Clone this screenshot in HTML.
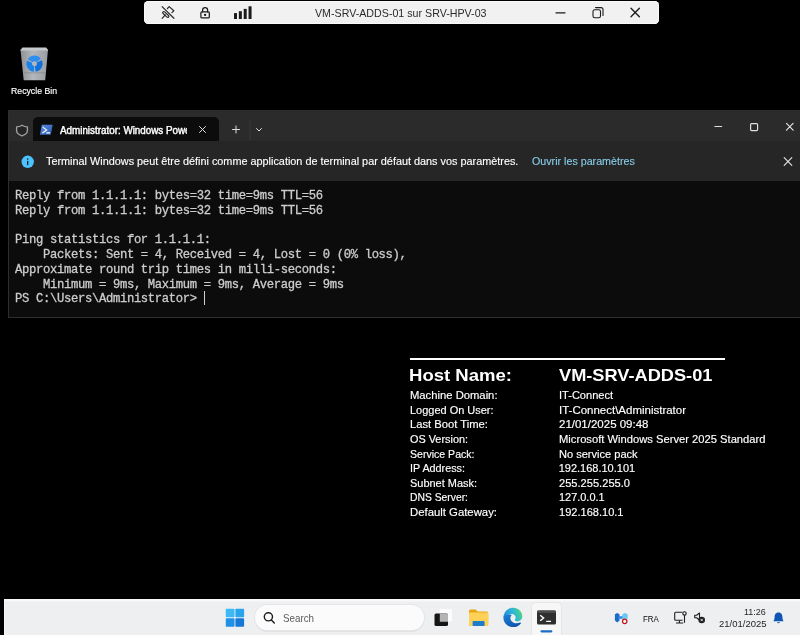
<!DOCTYPE html>
<html lang="fr">
<head>
<meta charset="utf-8">
<title>VM-SRV-ADDS-01 sur SRV-HPV-03</title>
<style>
  html, body { margin: 0; padding: 0; }
  body {
    width: 800px; height: 635px; overflow: hidden; position: relative;
    background: #000; color: #fff;
    font-family: "Liberation Sans", sans-serif;
  }
  #desktop { position: absolute; left: 0; top: 0; width: 800px; height: 635px; will-change: transform; }
  .abs { position: absolute; }
  .t { position: absolute; white-space: pre; transform-origin: 0 50%; line-height: 1; }

  /* connection bar */
  #cbar { position: absolute; left: 143.8px; top: 0.9px; width: 515.6px; height: 23.4px; background: #f1f1f1; border-radius: 4.5px; box-shadow: inset 0 0 0 1px #fafafa; }

  /* terminal window */
  #win { position: absolute; left: 8px; top: 110px; width: 792px; height: 208px; background: #0c0c0c; }
  #tabbar { position: absolute; left: 0; top: 0; width: 100%; height: 31.2px; background: #2b2b2b; }
  #tab { position: absolute; left: 25px; top: 7.2px; width: 186px; height: 24px; background: #0c0c0c; border-radius: 5px 5px 0 0; }
  #info { position: absolute; left: 0; top: 31.2px; width: 100%; height: 40px; background: #262626; }
  #term {
    position: absolute; left: 15px; top: 189.3px; margin: 0; -webkit-text-stroke: 0.3px #cccccc;
    font-family: "Liberation Mono", monospace; font-size: 12.2px; letter-spacing: -0.321px; line-height: 14.71px;
    color: #cccccc; white-space: pre;
  }
  #winborder { position: absolute; left: 0; top: 0; right: 0; bottom: 0; border: 1px solid #2e2e2e; border-right: 0; border-top: 0; pointer-events: none; }

  /* taskbar */
  #taskbar { position: absolute; left: 4px; top: 599px; width: 796px; height: 36px; background: linear-gradient(#f8f8f9 0, #f8f8f9 2px, #eeeff0 3px); box-shadow: inset 1px 0 0 #f6f6f7; }
  #search { position: absolute; left: 255px; top: 605.4px; width: 169px; height: 24.2px; border-radius: 12.2px; background: #fbfbfc; box-shadow: 0 0 0 1px #e6e6e9, 0 1.2px 0 0.4px #d6d6d9; }
  #active { position: absolute; left: 532px; top: 603px; width: 28.5px; height: 32px; border-radius: 4px 4px 0 0; background: #f7f7f8; box-shadow: 0 0 0 1px #e5e6e8; }
</style>
</head>
<body>
<div id="desktop">

<!-- Hyper-V connection bar -->
<div id="cbar"></div>
<svg class="abs" style="left:144px;top:0" width="515" height="24" viewBox="0 0 515 24" fill="none" stroke="#1b1b1b" stroke-width="1.1" stroke-linecap="round" stroke-linejoin="round">
  <!-- unpin -->
  <g stroke-width="1.2" stroke="#2a2a2a">
    <path d="M18.1 6.6 L29.9 18.3"/>
    <path d="M18.1 18.3 L21.3 14.9"/>
    <rect x="-3.8" y="-1.1" width="7.6" height="2.2" rx="1.1" transform="translate(21.8,14.5) rotate(43)"/>
    <path d="M23.4 8.5 L25.2 6.6 L29.8 10.8 L27.9 12.7"/>
  </g>
  <!-- lock -->
  <g transform="translate(61.1,0)" stroke-width="1.25">
    <rect x="-4.2" y="11.8" width="8.4" height="6.1" rx="1"/>
    <path d="M-2.5 11.8 V10 a2.5 2.5 0 0 1 5 0 V11.8"/>
    <circle cx="0" cy="14.8" r="0.55" fill="#1b1b1b"/>
  </g>
  <!-- signal -->
  <g fill="#1b1b1b" stroke="none">
    <rect x="90" y="13.1" width="3" height="5.9"/>
    <rect x="94.85" y="11.2" width="3" height="7.8"/>
    <rect x="99.7" y="8.9" width="3" height="10.1"/>
    <rect x="104.55" y="6.3" width="3" height="12.7"/>
  </g>
  <path d="M412 12.8 H421" stroke-width="1.3"/>
  <rect x="449" y="9.8" width="7.5" height="8" rx="1.8"/>
  <path d="M451.5 7.6 H457 a2 2 0 0 1 2 2 V15.5"/>
  <path d="M487 8.2 L495.4 16.7 M495.4 8.2 L487 16.7" stroke-width="1.3"/>
</svg>
<div class="t" style="left:315.3px;top:8.65px;font-size:10.1px;color:#2a2a2a;transform:scaleX(1.0566);">VM-SRV-ADDS-01 sur SRV-HPV-03</div>

<!-- Recycle Bin -->
<svg class="abs" style="left:16px;top:44px" width="36" height="40" viewBox="0 0 36 40">
  <defs>
    <linearGradient id="bin" x1="0" y1="0" x2="1" y2="0">
      <stop offset="0" stop-color="#8e9296"/><stop offset="0.45" stop-color="#b4b8bc"/><stop offset="1" stop-color="#9a9ea2"/>
    </linearGradient>
  </defs>
  <path d="M4.5 5.5 L32 5.5 L29.2 36.2 L7.7 36.2 Z" fill="url(#bin)"/>
  <path d="M6.4 3.4 L30.2 3.4 L32.3 6.6 L4.2 6.6 Z" fill="#c6c9cc"/>
  <path d="M14.11 16.74 A5.3 5.3 0 0 1 22.68 16.44" fill="none" stroke="#2f8ff0" stroke-width="5.6"/>
  <path d="M23.26 17.38 A5.3 5.3 0 0 1 19.24 24.95" fill="none" stroke="#1170dc" stroke-width="5.6"/>
  <path d="M18.13 24.99 A5.3 5.3 0 0 1 13.59 17.71" fill="none" stroke="#1a84ea" stroke-width="5.6"/>
  <rect x="7.6" y="28.4" width="21.6" height="0.9" fill="#7d8185" opacity="0.7"/>
</svg>
<div class="t" style="left:11.1px;top:87.12px;font-size:8.6px;color:#fff;transform:scaleX(1.0138);text-shadow:0 1px 1px #000;-webkit-text-stroke:0.15px #fff;">Recycle Bin</div>

<!-- Windows Terminal -->
<div id="win">
  <div id="tabbar"><div id="tab"></div></div>
  <div id="info"></div>
  <div id="winborder"></div>
</div>
<svg class="abs" style="left:8px;top:110px" width="792" height="72" viewBox="0 0 792 72" fill="none" stroke="#e0e0e0" stroke-width="1" stroke-linecap="round" stroke-linejoin="round">
  <!-- shield -->
  <path d="M14 15.2 C12.2 16.5 10.2 16.9 8.6 16.9 V20.6 C8.6 23.2 10.8 24.9 14 25.8 C17.2 24.9 19.4 23.2 19.4 20.6 V16.9 C17.8 16.9 15.8 16.5 14 15.2 Z" stroke="#a0a0a0" stroke-width="1.35" fill="#242424"/>
  <!-- powershell icon -->
  <defs><linearGradient id="psg" x1="0" y1="0" x2="1" y2="1"><stop offset="0" stop-color="#5a8ce0"/><stop offset="1" stop-color="#2b5bb2"/></linearGradient></defs>
  <path d="M33.8 14.8 H44.7 L42.8 24.7 H31.9 Z" fill="url(#psg)" stroke="none"/>
  <path d="M35 17.4 L38.8 20.1 L34.8 22.8 M38.8 22.9 H41.6" stroke="#fff" stroke-width="1.15"/>
  <!-- tab close -->
  <path d="M191.5 16.5 L197.5 22.5 M197.5 16.5 L191.5 22.5"/>
  <!-- plus -->
  <path d="M224.5 19.5 H231.5 M228 16 V23"/>
  <path d="M242 10 V30" stroke="#3a3a3a"/>
  <!-- chevron -->
  <path d="M248.5 18.5 L251 21 L253.5 18.5"/>
  <!-- min / max / close -->
  <g stroke-width="1.2"><path d="M706.9 16.5 H713.7"/>
  <rect x="742.6" y="13.6" width="7" height="7" rx="1"/>
  <path d="M778.5 13.4 L785.1 20.2 M785.1 13.4 L778.5 20.2"/></g>
  <!-- info icon -->
  <circle cx="19.7" cy="51.8" r="6.2" fill="#4cc2ff" stroke="none"/>
  <path d="M19.7 51.4 V54.6" stroke="#1a1a1a" stroke-width="1.3"/>
  <circle cx="19.7" cy="49" r="0.8" fill="#1a1a1a" stroke="none"/>
  <!-- info close -->
  <path d="M776.2 47.6 L783.8 55.4 M783.8 47.6 L776.2 55.4" stroke-width="1.2"/>
</svg>
<div class="abs" style="left:60.0px;top:125.53px;width:126.8px;height:13.0px;overflow:hidden"><div class="t" style="left:0;top:0;font-size:10.0px;color:#fff;transform:scaleX(0.9832);-webkit-text-stroke:0.4px #fff;">Administrator: Windows Powe</div></div>
<div class="t" style="left:46.0px;top:156.80px;font-size:10.4px;color:#fff;transform:scaleX(1.0446);-webkit-text-stroke:0.12px #fff;">Terminal Windows peut être défini comme application de terminal par défaut dans vos paramètres.</div>
<div class="t" style="left:531.6px;top:156.80px;font-size:10.4px;color:#86cbe6;transform:scaleX(1.0290);-webkit-text-stroke:0.12px #86cbe6;">Ouvrir les paramètres</div>
<pre id="term">Reply from 1.1.1.1: bytes=32 time=9ms TTL=56
Reply from 1.1.1.1: bytes=32 time=9ms TTL=56

Ping statistics for 1.1.1.1:
    Packets: Sent = 4, Received = 4, Lost = 0 (0% loss),
Approximate round trip times in milli-seconds:
    Minimum = 9ms, Maximum = 9ms, Average = 9ms
PS C:\Users\Administrator> </pre>
<div class="abs" style="left:203.6px;top:290.8px;width:1.4px;height:14.7px;background:#d0d0d0"></div>

<!-- BGInfo -->
<div class="abs" style="left:409.5px;top:358.2px;width:315.5px;height:1.6px;background:#fff"></div>
<div class="t" style="left:409.2px;top:368.35px;font-size:16.6px;color:#fff;font-weight:bold;transform:scaleX(1.1169);">Host Name:</div>
<div class="t" style="left:559.0px;top:368.35px;font-size:16.6px;color:#fff;font-weight:bold;transform:scaleX(1.0968);">VM-SRV-ADDS-01</div>
<div class="t" style="left:409.6px;top:389.94px;font-size:11.0px;color:#fff;transform:scaleX(1.0223);-webkit-text-stroke:0.15px #fff;">Machine Domain:</div>
<div class="t" style="left:558.7px;top:389.94px;font-size:11.0px;color:#fff;transform:scaleX(1.0035);-webkit-text-stroke:0.15px #fff;">IT-Connect</div>
<div class="t" style="left:409.6px;top:404.59px;font-size:11.0px;color:#fff;transform:scaleX(0.9966);-webkit-text-stroke:0.15px #fff;">Logged On User:</div>
<div class="t" style="left:558.7px;top:404.59px;font-size:11.0px;color:#fff;transform:scaleX(1.0439);-webkit-text-stroke:0.15px #fff;">IT-Connect\Administrator</div>
<div class="t" style="left:409.6px;top:419.24px;font-size:11.0px;color:#fff;transform:scaleX(1.0204);-webkit-text-stroke:0.15px #fff;">Last Boot Time:</div>
<div class="t" style="left:558.7px;top:419.24px;font-size:11.0px;color:#fff;transform:scaleX(1.0451);-webkit-text-stroke:0.15px #fff;">21/01/2025 09:48</div>
<div class="t" style="left:409.6px;top:433.89px;font-size:11.0px;color:#fff;transform:scaleX(0.9880);-webkit-text-stroke:0.15px #fff;">OS Version:</div>
<div class="t" style="left:558.7px;top:433.89px;font-size:11.0px;color:#fff;transform:scaleX(1.0173);-webkit-text-stroke:0.15px #fff;">Microsoft Windows Server 2025 Standard</div>
<div class="t" style="left:409.6px;top:448.54px;font-size:11.0px;color:#fff;transform:scaleX(0.9591);-webkit-text-stroke:0.15px #fff;">Service Pack:</div>
<div class="t" style="left:558.7px;top:448.54px;font-size:11.0px;color:#fff;transform:scaleX(1.0043);-webkit-text-stroke:0.15px #fff;">No service pack</div>
<div class="t" style="left:409.6px;top:463.19px;font-size:11.0px;color:#fff;transform:scaleX(0.9810);-webkit-text-stroke:0.15px #fff;">IP Address:</div>
<div class="t" style="left:558.7px;top:463.19px;font-size:11.0px;color:#fff;-webkit-text-stroke:0.15px #fff;">192.168.10.101</div>
<div class="t" style="left:409.6px;top:477.84px;font-size:11.0px;color:#fff;transform:scaleX(0.9961);-webkit-text-stroke:0.15px #fff;">Subnet Mask:</div>
<div class="t" style="left:558.7px;top:477.84px;font-size:11.0px;color:#fff;transform:scaleX(1.0091);-webkit-text-stroke:0.15px #fff;">255.255.255.0</div>
<div class="t" style="left:409.6px;top:492.49px;font-size:11.0px;color:#fff;transform:scaleX(0.9393);-webkit-text-stroke:0.15px #fff;">DNS Server:</div>
<div class="t" style="left:558.7px;top:492.49px;font-size:11.0px;color:#fff;transform:scaleX(0.9940);-webkit-text-stroke:0.15px #fff;">127.0.0.1</div>
<div class="t" style="left:409.6px;top:507.14px;font-size:11.0px;color:#fff;transform:scaleX(1.0311);-webkit-text-stroke:0.15px #fff;">Default Gateway:</div>
<div class="t" style="left:558.7px;top:507.14px;font-size:11.0px;color:#fff;transform:scaleX(1.0041);-webkit-text-stroke:0.15px #fff;">192.168.10.1</div>

<!-- Taskbar -->
<div id="taskbar"></div>
<div id="search"></div>
<div id="active"></div>
<svg class="abs" style="left:0;top:599px" width="800" height="36" viewBox="0 599 800 36">
  <!-- start -->
  <rect x="225.8" y="608.8" width="8.7" height="8.5" rx="0.8" fill="#3dbaf6"/>
  <rect x="235.4" y="608.8" width="8.7" height="8.5" rx="0.8" fill="#2ba4ee"/>
  <rect x="225.8" y="618.2" width="8.7" height="8.5" rx="0.8" fill="#1e90e6"/>
  <rect x="235.4" y="618.2" width="8.7" height="8.5" rx="0.8" fill="#1577d6"/>
  <!-- search glass -->
  <g fill="none" stroke="#1d1d1d" stroke-width="1.4" stroke-linecap="round">
    <circle cx="268.4" cy="616.8" r="4.1"/><path d="M271.4 620 L274.3 623"/>
  </g>
  <!-- task view -->
  <rect x="439.6" y="609" width="12.4" height="12.4" rx="1.5" fill="#fcfcfc"/>
  <rect x="434.5" y="613.5" width="13.5" height="12.5" rx="1.5" fill="#151515"/>
  <path d="M439.8 613.5 h6.7 q1.5 0 1.5 1.5 v6.8 h-8.2 z" fill="#b4b4b4"/>
  <!-- explorer -->
  <path d="M469 611 q0 -1.6 1.6 -1.6 h5 l2 2 h9 q1.6 0 1.6 1.6 v11.4 q0 1.6 -1.6 1.6 h-16 q-1.6 0 -1.6 -1.6 z" fill="#e9a512"/>
  <rect x="469" y="612.6" width="19.2" height="13.4" rx="1.4" fill="#ffd257"/>
  <rect x="472.6" y="621" width="12" height="5" rx="0.8" fill="#1d7ccc"/>
  <!-- edge -->
  <defs>
    <linearGradient id="eg1" x1="0" y1="0.6" x2="1" y2="0.3">
      <stop offset="0" stop-color="#1f8ee0"/><stop offset="0.55" stop-color="#2fb6d8"/><stop offset="1" stop-color="#4fd873"/>
    </linearGradient>
    <linearGradient id="eg2" x1="0" y1="0" x2="0.8" y2="1">
      <stop offset="0" stop-color="#1c84d8"/><stop offset="1" stop-color="#0f4fa8"/>
    </linearGradient>
  </defs>
  <path d="M503.5 616.8 C504.2 611.2 508.3 607.7 513 607.7 C518.6 607.7 522.3 612 522.3 616.3 C522.3 619.6 519.8 621.4 517.3 621.4 C515.4 621.4 514.6 620.4 515 619.5 C515.9 618.2 515.9 616.6 514.9 615.4 C513.4 613.6 510.4 613.5 508 614.6 C505.8 615.6 504.3 617.6 503.5 616.8 Z" fill="url(#eg1)"/>
  <path d="M503.5 616.8 C502.9 622.2 507 627.1 512.9 627.1 C516.2 627.1 519.2 625.6 520.8 623.4 C521.2 622.8 520.6 622.3 520 622.6 C517 624 513 623.4 511.2 620.8 C509.9 618.9 510.2 616.4 511.8 614.9 C508.6 613.6 504.8 614.6 503.5 616.8 Z" fill="url(#eg2)"/>
  <!-- terminal -->
  <rect x="537" y="610.6" width="19" height="13.8" rx="1.5" fill="#2f2f2f"/>
  <rect x="537" y="610.6" width="19" height="2.3" rx="1.1" fill="#4c4c4c"/>
  <path d="M540.2 615.2 L543.6 618 L540.2 620.8 M546.2 621.4 H551" fill="none" stroke="#fff" stroke-width="1.4"/>
  <rect x="540.4" y="630.2" width="12" height="2.2" rx="1.1" fill="#1a6cc4"/>
  <!-- tray: hyper-v / disks -->
  <path d="M614.9 614.3 l2.3 -1.3 l2.3 1.3 v6.3 l-2.3 2 l-2.3 -2 z" fill="#1b6bc8"/>
  <rect x="618.6" y="616.2" width="5" height="2.6" fill="#2f8fe0"/>
  <path d="M622.3 614.3 l2.6 -1.3 l2.8 1.3 v4.4 h-5.4 z" fill="#6cc8f0"/>
  <circle cx="624.7" cy="621.3" r="2.2" fill="#fff" stroke="#c4121c" stroke-width="1.25"/>
  <!-- network -->
  <g fill="none" stroke="#1f1f1f" stroke-width="1.1">
    <path d="M682.4 612.2 H675.7 q-1 0 -1 1 V619.3 q0 1 1 1 H682.6"/>
    <path d="M679.4 620.4 V622.8 M676 623 H683.2"/>
    <circle cx="684.5" cy="613.4" r="1.7" fill="#eeeff1"/>
    <path d="M684.5 615.2 V622.8"/>
  </g>
  <!-- volume muted -->
  <path d="M694.7 615.3 H696.6 L699.5 613 V620 L696.6 617.8 H694.7 Z" fill="none" stroke="#1f1f1f" stroke-width="1.1" stroke-linejoin="round"/>
  <circle cx="701.7" cy="620" r="3.3" fill="#1f1f1f"/>
  <path d="M700.5 618.8 L702.9 621.2 M702.9 618.8 L700.5 621.2" stroke="#fff" stroke-width="0.8"/>
  <!-- bell -->
  <path d="M778.5 612.4 C775.4 612.4 774.6 615 774.6 617 C774.6 619 774 620.2 773.3 621.2 H783.7 C783 620.2 782.4 619 782.4 617 C782.4 615 781.6 612.4 778.5 612.4 Z" fill="#0f56b3"/>
  <path d="M776.9 622.2 a1.7 1.7 0 0 0 3.2 0 z" fill="#0f56b3"/>
</svg>
<div class="t" style="left:283.0px;top:613.67px;font-size:10.2px;color:#5c5c5c;transform:scaleX(0.9603);">Search</div>
<div class="t" style="left:643.0px;top:614.55px;font-size:8.8px;color:#0a0a0a;transform:scaleX(0.8972);">FRA</div>
<div class="t" style="left:743.6px;top:608.43px;font-size:9.3px;color:#1f1f1f;transform:scaleX(0.9655);">11:26</div>
<div class="t" style="left:718.8px;top:620.43px;font-size:9.3px;color:#1f1f1f;transform:scaleX(1.0208);">21/01/2025</div>

</div>
</body>
</html>
